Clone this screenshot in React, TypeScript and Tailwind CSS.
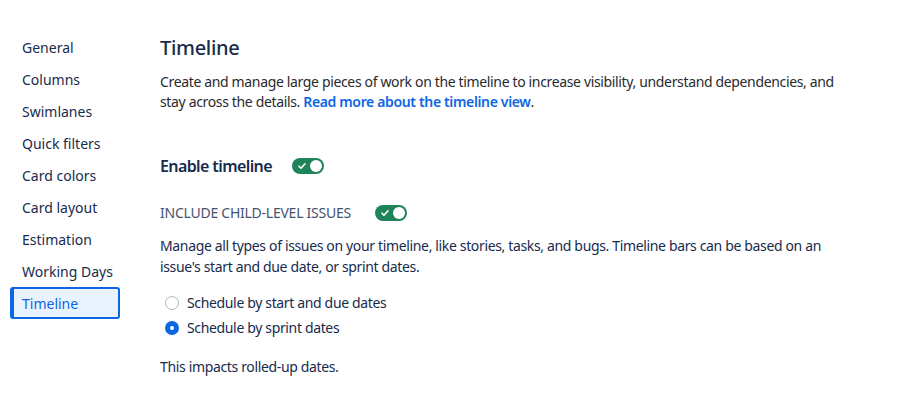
import { useState } from "react";

const navItems = ["General", "Columns", "Swimlanes", "Quick filters", "Card colors", "Card layout", "Estimation", "Working Days", "Timeline"];

const Toggle = ({ on }: { on: boolean }) => (
  <span className={`relative inline-flex h-4 w-8 items-center rounded-full ${on ? "bg-[#1f845a]" : "bg-[#8590a2]"}`}>
    {on && (
      <svg className="absolute left-[5px]" width="10" height="10" viewBox="0 0 10 10" fill="none">
        <path d="M2 5.2l2 2 4-4.4" stroke="white" strokeWidth="1.6" strokeLinecap="round" strokeLinejoin="round" />
      </svg>
    )}
    <span className={`absolute h-3 w-3 rounded-full bg-white ${on ? "left-[18px]" : "left-[2px]"}`} />
  </span>
);

const Radio = ({ checked, label, onClick }: { checked: boolean; label: string; onClick: () => void }) => (
  <label className="flex h-[25px] cursor-pointer items-center gap-2" onClick={onClick}>
    <span className={`flex h-[14px] w-[14px] items-center justify-center rounded-full ${checked ? "bg-[#0c66e4]" : "border border-[#b3b9c4] bg-white"}`}>
      {checked && <span className="h-1 w-1 rounded-full bg-white" />}
    </span>
    <span>{label}</span>
  </label>
);

const App = () => {
  const [active] = useState("Timeline");
  const [mode, setMode] = useState("sprint");

  return (
    <div className="flex min-h-screen bg-white pt-[31px] text-[14px] tracking-[-0.35px] text-[#172b4d]" style={{ fontFamily: '"Noto Sans", sans-serif' }}>
      <nav className="ml-[10px] flex w-[110px] shrink-0 flex-col tracking-normal">
        {navItems.map((n) => (
          <div
            key={n}
            className={`flex h-8 items-center rounded-[3px] pl-3 ${n === active ? "border-2 border-l-4 border-[#0c66e4] bg-[#e9f2ff] pl-[8px] text-[#0c66e4]" : ""}`}
          >
            {n}
          </div>
        ))}
      </nav>
      <main className="ml-10 max-w-[680px] pt-[5px]">
        <h1 className="text-[20px] font-medium leading-6 tracking-[-0.3px]">Timeline</h1>
        <p className="mt-[12px] leading-5 text-[#292a2e]">
          Create and manage large pieces of work on the timeline to increase visibility, understand dependencies, and stay across the details.{" "}
          <a className="font-semibold text-[#0c66e4]">Read more about the timeline view</a>.
        </p>
        <div className="mt-[42px] flex items-center gap-[20px]">
          <span className="text-[16px] font-semibold tracking-[-0.6px]">Enable timeline</span>
          <Toggle on />
        </div>
        <div className="mt-[24px] flex items-center gap-[24px]">
          <span className="uppercase tracking-[-0.25px] text-[#44546f]">Include child-level issues</span>
          <Toggle on />
        </div>
        <p className="mt-[12px] leading-[21px]">
          Manage all types of issues on your timeline, like stories, tasks, and bugs. Timeline bars can be based on an issue's start and due date, or sprint dates.
        </p>
        <div className="mt-[13px] flex flex-col pl-[5px]">
          <Radio checked={mode === "start"} label="Schedule by start and due dates" onClick={() => setMode("start")} />
          <Radio checked={mode === "sprint"} label="Schedule by sprint dates" onClick={() => setMode("sprint")} />
        </div>
        <p className="mt-[16px]">This impacts rolled-up dates.</p>
      </main>
    </div>
  );
};

export default App;
